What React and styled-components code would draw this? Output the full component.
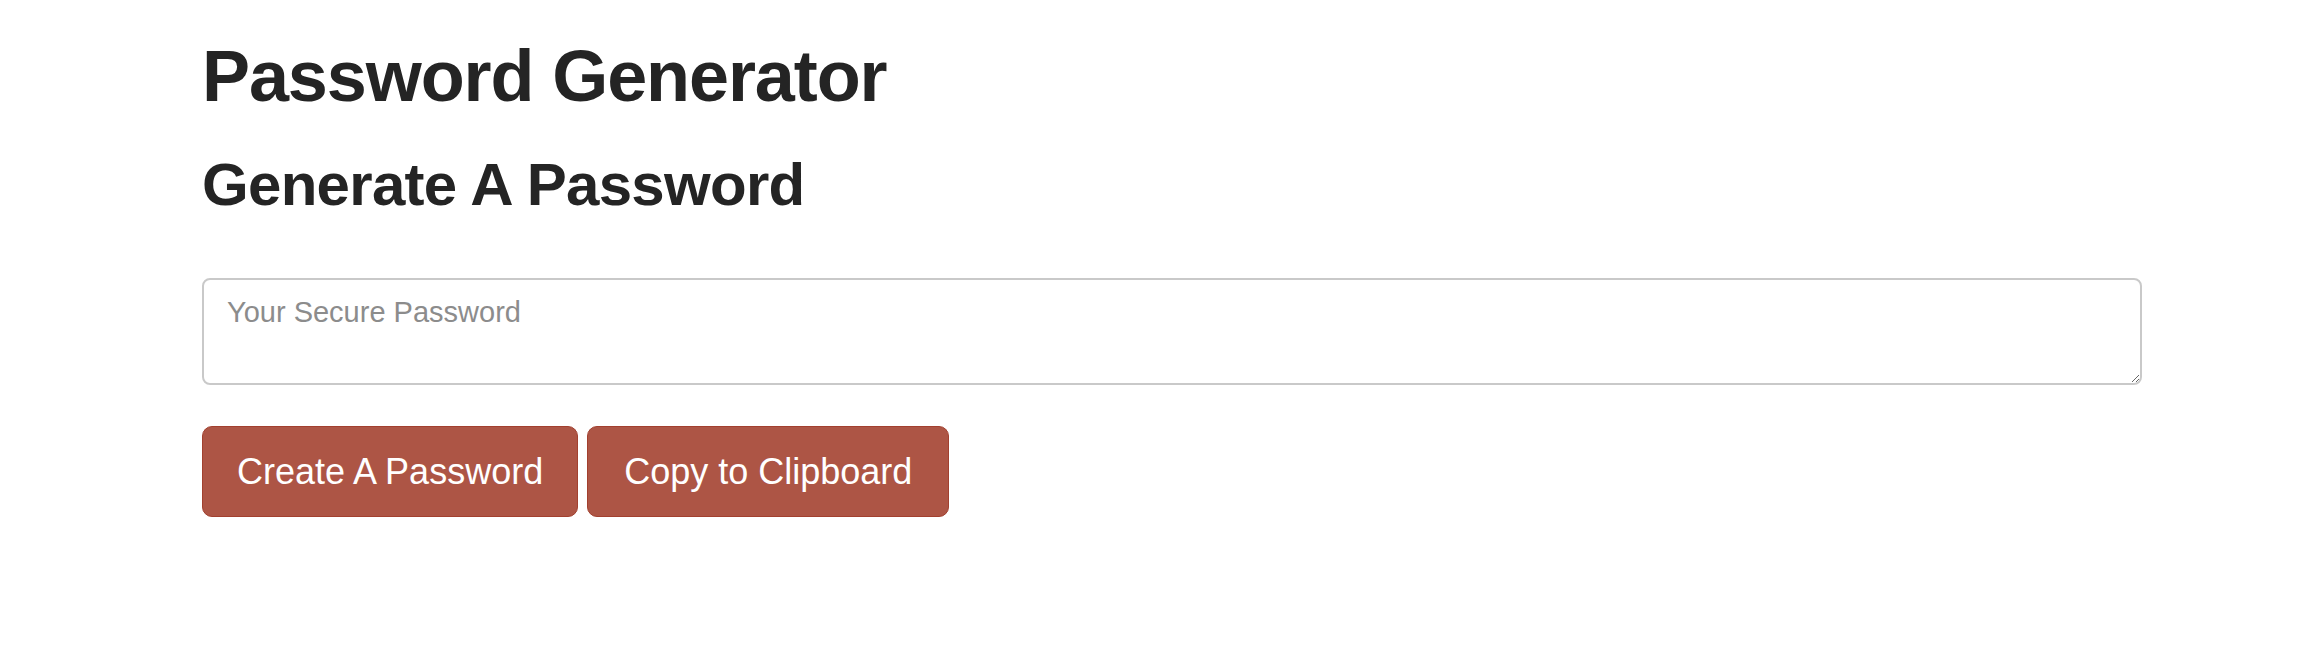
import React from "react";
import styled, { createGlobalStyle } from "styled-components";

const GlobalStyle = createGlobalStyle`
  html, body {
    margin: 0;
    padding: 0;
    background: #ffffff;
  }
  body {
    font-family: "Liberation Sans", Arial, sans-serif;
    color: #242424;
  }
`;

function App() {
  return (
    <>
      <GlobalStyle />
      <Page>
        <Title>Password Generator</Title>
        <SubTitle>Generate A Password</SubTitle>
        <PasswordBox placeholder="Your Secure Password" readOnly />
        <ButtonRow>
          <ActionButton type="button">Create A Password</ActionButton>
          <ActionButton type="button" $wide>
            Copy to Clipboard
          </ActionButton>
        </ButtonRow>
      </Page>
    </>
  );
}

export default App;

const Page = styled.div`
  display: flex;
  flex-direction: column;
  align-items: flex-start;
  padding: 33px 160px 0 202px;
`;

const Title = styled.h1`
  margin: 0;
  font-size: 72px;
  font-weight: 700;
  line-height: 1.2;
  letter-spacing: -1.1px;
  color: #242424;
  white-space: nowrap;
`;

const SubTitle = styled.h2`
  margin: 30px 0 0;
  font-size: 60px;
  font-weight: 700;
  line-height: 1.2;
  letter-spacing: -0.7px;
  color: #242424;
  white-space: nowrap;
`;

const PasswordBox = styled.textarea`
  display: block;
  box-sizing: border-box;
  width: 100%;
  height: 107px;
  margin-top: 57px;
  padding: 11px 23px;
  border: 2px solid #c9c9c9;
  border-radius: 8px;
  font-family: "Liberation Sans", Arial, sans-serif;
  font-size: 29px;
  line-height: 1.5;
  color: #242424;
  background: #ffffff;
  outline: none;

  &::placeholder {
    color: #8c8c8c;
  }
`;

const ButtonRow = styled.div`
  display: flex;
  gap: 9px;
  margin-top: 41px;
`;

const ActionButton = styled.button`
  box-sizing: border-box;
  height: 91px;
  padding: 0 ${(p) => (p.$wide ? "36px" : "34px")};
  border: 1px solid #a2402f;
  border-radius: 10px;
  background-color: #ad5545;
  color: #ffffff;
  font-family: "Liberation Sans", Arial, sans-serif;
  font-size: 36px;
  line-height: 1.5;
  cursor: pointer;
`;
